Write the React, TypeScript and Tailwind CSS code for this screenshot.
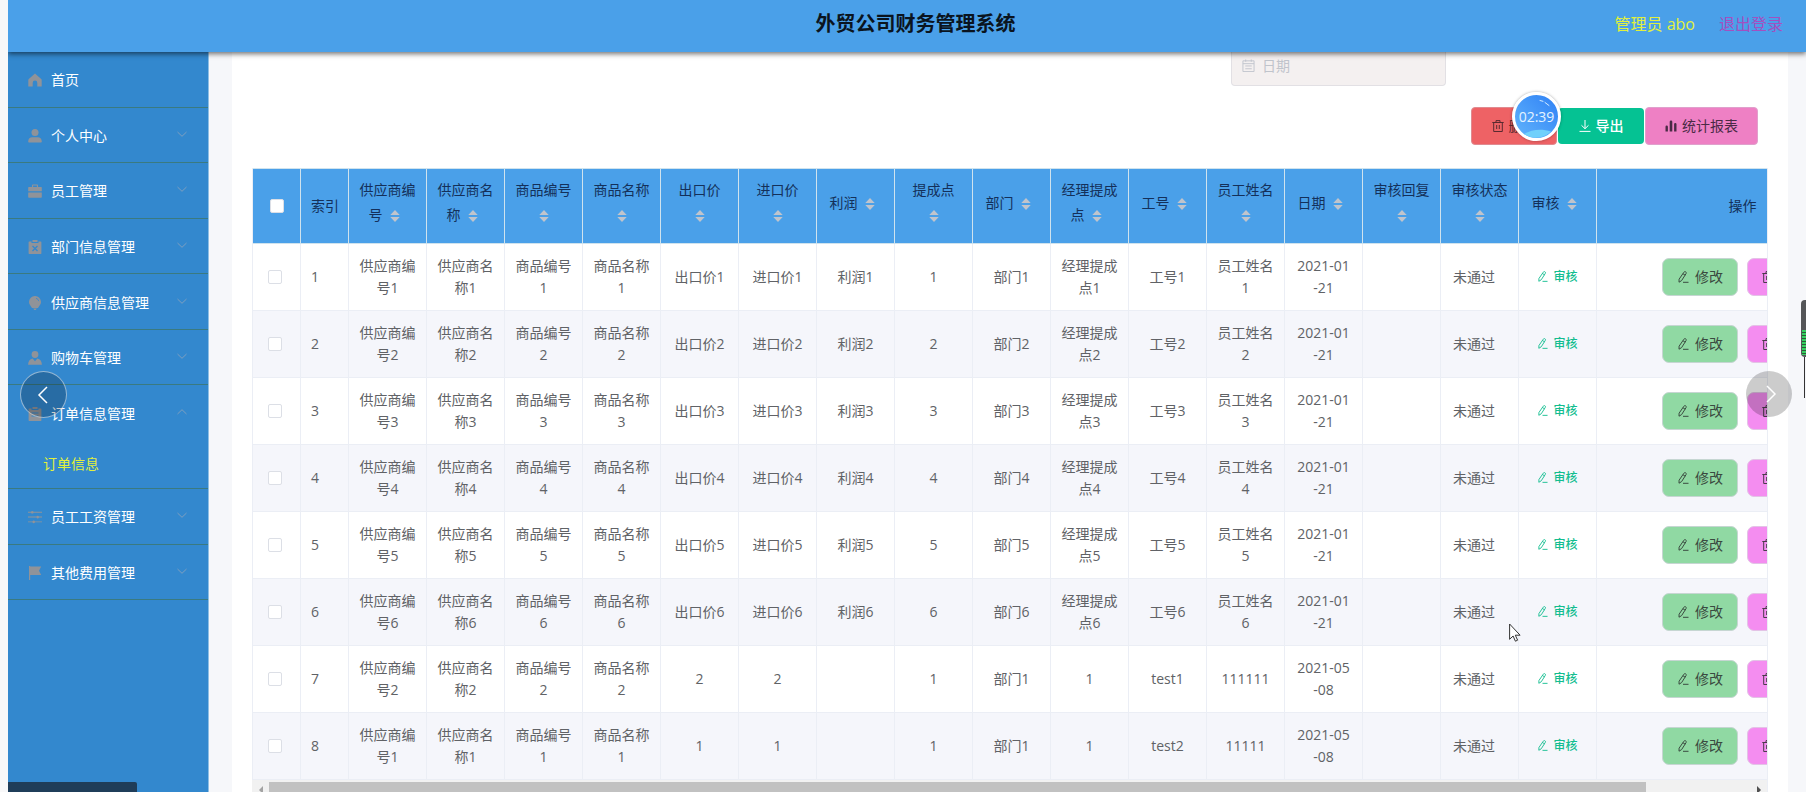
import React from "react";

type IconName =
  | "home" | "user" | "suitcase" | "clipboardX" | "bulb" | "custom" | "order" | "sliders" | "flag";

function MenuIcon({ name }: { name: IconName }) {
  return (
    <svg viewBox="0 0 14 14" className="h-[14px] w-[14px] shrink-0 fill-current" aria-hidden="true">
      {name === "home" && <path d="M7 .4 13.2 6c.3.3.5.6.5 1v6.6H9.300V9.900a2.300 2.300 0 0 0-4.600 0v3.700H.3V7c0-.4.2-.7.5-1z" />}
      {name === "user" && (
        <>
          <circle cx="7" cy="3.6" r="3.5" />
          <path d="M.2 12.6c0-2.9 1.8-4.4 4-4.4h5.6c2.2 0 4 1.5 4 4.4 0 .7-.4 1-1 1H1.2c-.6 0-1-.3-1-1z" />
        </>
      )}
      {name === "suitcase" && (
        <path
          fillRule="evenodd"
          d="M4 3V1.4C4 .8 4.4.4 5 .4h4c.6 0 1 .4 1 1V3h3.2c.4 0 .6.3.6.6V7.300H.2V3.600C.2 3.300.4 3 .8 3zm1.100 0h3.800V1.500H5.100zM.2 8.400h13.600v4.600c0 .4-.3.7-.7.7H.9c-.4 0-.7-.3-.7-.7z"
        />
      )}
      {name === "clipboardX" && (
        <>
          <path d="M1.200 1.500h2.300V3h7V1.500h2.300c.4 0 .6.300.6.600v11.200c0 .4-.2.700-.6.700H1.200c-.4 0-.600-.3-.600-.7V2.100c0-.3.200-.6.600-.6zM4.500 0h5v2h-5z" />
          <path d="M4.500 6l5 5M9.500 6l-5 5" className="fill-none stroke-[#3388ce] stroke-[1.300]" />
        </>
      )}
      {name === "bulb" && (
        <>
          <path d="M7 0a5.900 5.900 0 0 1 6 5.900c0 2.500-1.800 3.700-3 6H4c-1.200-2.300-3-3.500-3-6A5.900 5.900 0 0 1 7 0zM5.200 12.600h3.600L7.800 14H6.200z" />
          <path d="M8 2.200a4 4 0 0 1 2.800 2.900" className="fill-none stroke-[#3388ce] stroke-[.8]" />
        </>
      )}
      {name === "custom" && (
        <>
          <circle cx="7" cy="3.500" r="3.400" />
          <path d="M4.600 7.500 7 10.200l2.400-2.700c2.800.6 4.500 3 4.500 6.200H.1c0-3.200 1.700-5.600 4.500-6.200z" />
        </>
      )}
      {name === "order" && (
        <path
          fillRule="evenodd"
          d="M1.200 1.500h2.300V3h7V1.500h2.300c.4 0 .6.300.6.600v11.200c0 .4-.2.700-.6.700H1.200c-.4 0-.600-.3-.600-.7V2.100c0-.3.200-.6.600-.6zM4.500 0h5v2h-5zM3.500 5.500v1h7v-1zm0 3v1h7v-1z"
        />
      )}
      {name === "sliders" && (
        <path d="M0 1.800h3a1.400 1.400 0 0 1 2.600 0H14v.9H5.600a1.400 1.400 0 0 1-2.600 0H0zM0 6.600h8.400a1.400 1.400 0 0 1 2.600 0h3v.9h-3a1.400 1.400 0 0 1-2.600 0H0zM0 11.400h4.400a1.400 1.400 0 0 1 2.600 0h7v.9H7a1.400 1.400 0 0 1-2.600 0H0z" />
      )}
      {name === "flag" && <path d="M1 0h1.200v.5h11L11 4.700l2.200 4.300h-11V14H1z" />}
    </svg>
  );
}

function Chevron({ up }: { up?: boolean }) {
  return (
    <svg viewBox="0 0 12 12" className="mb-1 h-3 w-3 fill-none stroke-[#7d9fc0]" aria-hidden="true">
      <path d={up ? "M1.500 8 6 3.700 10.500 8" : "M1.500 4 6 8.300 10.500 4"} />
    </svg>
  );
}

function PencilIcon({ className }: { className: string }) {
  return (
    <svg viewBox="0 0 12 12" className={className} fill="none" stroke="currentColor" aria-hidden="true">
      <path d="M6.700 1.500c.5-.9 1.200-1.100 1.900-.7s.9 1.100.4 1.900L4.600 9.600 2 11.200l.1-3zM5.900 2.700l2.300 1.500M6 11.300h5.500" />
    </svg>
  );
}

function TrashIcon({ className }: { className: string }) {
  return (
    <svg viewBox="0 0 12 12" className={className} fill="none" stroke="currentColor" aria-hidden="true">
      <path d="M.3 2.500h11.400M1.700 2.500v9h8.600v-9M4 2.300V.6h4v1.700M4.700 5v4M7.300 5v4" />
    </svg>
  );
}

const menu: { label: string; icon: IconName; open?: boolean; leaf?: boolean }[] = [
  { label: "首页", icon: "home", leaf: true },
  { label: "个人中心", icon: "user" },
  { label: "员工管理", icon: "suitcase" },
  { label: "部门信息管理", icon: "clipboardX" },
  { label: "供应商信息管理", icon: "bulb" },
  { label: "购物车管理", icon: "custom" },
  { label: "订单信息管理", icon: "order", open: true },
  { label: "员工工资管理", icon: "sliders" },
  { label: "其他费用管理", icon: "flag" },
];

const columns = [
  "供应商编号", "供应商名称", "商品编号", "商品名称", "出口价", "进口价", "利润", "提成点",
  "部门", "经理提成点", "工号", "员工姓名", "日期", "审核回复", "审核状态", "审核",
];

const sample = (n: number): string[] => [
  `供应商编号${n}`, `供应商名称${n}`, `商品编号${n}`, `商品名称${n}`, `出口价${n}`, `进口价${n}`,
  `利润${n}`, `${n}`, `部门${n}`, `经理提成点${n}`, `工号${n}`, `员工姓名${n}`, "2021-01|-21", "",
];

const rows: string[][] = [
  ...[1, 2, 3, 4, 5, 6].map(sample),
  ["供应商编号2", "供应商名称2", "商品编号2", "商品名称2", "2", "2", "", "1", "部门1", "1", "test1", "111111", "2021-05|-08", ""],
  ["供应商编号1", "供应商名称1", "商品编号1", "商品名称1", "1", "1", "", "1", "部门1", "1", "test2", "11111", "2021-05|-08", ""],
];

function SortCaret() {
  return (
    <span className="inline-flex h-[30px] w-6 items-center justify-center align-middle">
      <svg viewBox="0 0 10 12" className="h-3 w-[10px] fill-[#c0c4cc]" aria-hidden="true">
        <path d="M5 0 9.700 5H.3zM5 12 .3 7h9.400z" />
      </svg>
    </span>
  );
}

function Check({ label }: { label: string }) {
  return (
    <input
      type="checkbox"
      aria-label={label}
      className="block h-[14px] w-[14px] appearance-none rounded-xs border border-[#dcdfe6] bg-white"
    />
  );
}

function Sidebar() {
  return (
    <nav className="w-[201px] shrink-0 border-r border-[#8fbfe4] bg-[#3388ce] text-sm text-white">
      <ul className="flex h-[548px] flex-col">
        {menu.map((m) => (
          <React.Fragment key={m.label}>
            <li className={m.open ? "flex-1" : "flex-1 border-b border-[#3a7a80]"}>
              <a href="#" className="flex h-full items-center gap-[9px] pt-0.5 pr-5 pl-5">
                <span className="text-[#909399]">
                  <MenuIcon name={m.icon} />
                </span>
                <span className="flex-1">{m.label}</span>
                {!m.leaf && <Chevron up={m.open} />}
              </a>
            </li>
            {m.open && (
              <li className="h-[49px] shrink-0 border-b border-[#3a7a80]">
                <a href="#" className="flex h-full items-center pl-[35px] text-[#e2f03c]">
                  订单信息
                </a>
              </li>
            )}
          </React.Fragment>
        ))}
      </ul>
    </nav>
  );
}

function OrderTable() {
  return (
    <div className="overflow-hidden border-l border-[#ebeef5]">
      <table className="w-[1635px] table-fixed border-separate border-spacing-0 text-center text-sm text-[#606266]">
        <colgroup>
          <col className="w-12" />
          <col className="w-12" />
          {columns.map((c) => (
            <col key={c} className="w-[78px]" />
          ))}
          <col />
        </colgroup>
        <thead className="bg-[#4aa0e9] text-[#14305a]">
          <tr className="h-[76px]">
            <th className="border-y border-r border-[#cfe3ee] pl-[17px]">
              <Check label="全选" />
            </th>
            <th className="border-y border-r border-[#cfe3ee] pl-[10px] text-left font-normal">索引</th>
            {columns.map((c) => (
              <th key={c} className="border-y border-r border-[#cfe3ee] px-[10px] pb-1 leading-[23px] font-normal break-all">
                {c}
                <SortCaret />
              </th>
            ))}
            <th className="border-y border-[#cfe3ee] font-normal">操作</th>
          </tr>
        </thead>
        <tbody>
          {rows.map((r, i) => (
            <tr key={i} className="h-[67px] even:bg-[#f5f6fb]">
              <td className="border-r border-b border-[#ebeef5] pl-[15px]">
                <Check label={`选择第${i + 1}行`} />
              </td>
              <td className="border-r border-b border-[#ebeef5] pl-[10px] text-left">{i + 1}</td>
              {r.map((v, j) => (
                <td key={j} className="border-r border-b border-[#ebeef5] px-[10px] leading-[22px] break-all">
                  {v.split("|").map((part, k) => (
                    <React.Fragment key={k}>
                      {k > 0 && <br />}
                      {part}
                    </React.Fragment>
                  ))}
                </td>
              ))}
              <td className="border-r border-b border-[#ebeef5] pl-3 text-left">未通过</td>
              <td className="border-r border-b border-[#ebeef5]">
                <button type="button" className="inline-flex items-center gap-[5px] text-xs font-medium text-[#13bd8f]">
                  <PencilIcon className="h-[11px] w-[11px]" />
                  审核
                </button>
              </td>
              <td className="border-b border-[#ebeef5]">
                <div className="flex justify-center gap-[9px]">
                  <button type="button" className="flex h-[38px] w-[76px] items-center justify-center gap-1.5 rounded-[7px] border border-[#c6d6d2] bg-[#90d9a3] text-[#3a4a40]">
                    <PencilIcon className="h-3 w-3" />
                    修改
                  </button>
                  <button type="button" className="flex h-[38px] w-[76px] items-center justify-center gap-1.5 rounded-[7px] border border-[#e3c3e6] bg-[#f48df0] text-[#4a3a4a]">
                    <TrashIcon className="h-3 w-3" />
                    删除
                  </button>
                </div>
              </td>
            </tr>
          ))}
        </tbody>
      </table>
    </div>
  );
}

export default function App() {
  return (
    <div className="relative flex h-screen flex-col overflow-hidden bg-[#f8f8f9] pl-2 font-['Open_Sans','Noto_Sans_CJK_SC',sans-serif]">
      <header className="z-10 flex h-[52px] shrink-0 items-center bg-[#4aa0e9] pr-[23px] pb-1 shadow-[0_2px_5px_rgba(0,0,0,0.55)] [clip-path:inset(0_0_-12px_0)]">
        <div className="flex-1" />
        <h1 className="pl-10 text-xl font-bold text-[#0a1420]">外贸公司财务管理系统</h1>
        <div className="flex flex-1 justify-end gap-6 text-base">
          <span className="text-[#e2f03c]">管理员 abo</span>
          <a href="#" className="text-[#a44fc0]">退出登录</a>
        </div>
      </header>

      <div className="flex min-h-0 flex-1">
        <Sidebar />
        <main className="min-w-0 flex-1 overflow-hidden bg-[#f6f7fa] pr-[18px] pl-[23px]">
          <div className="h-full bg-white px-5">
            <div className="flex justify-end pr-[322px]">
              <label className="flex h-[34px] w-[215px] items-center gap-[7px] rounded-b border border-t-0 border-[#e2e0e4] bg-[#f4f0f0] px-[10px] text-[#c0c4cc]">
                <svg viewBox="0 0 14 14" className="mb-1.5 h-[13px] w-[13px] shrink-0 fill-none stroke-current" aria-hidden="true">
                  <path d="M1 2h12v11.500H1zM1 5h12M4 .5v2.500M10 .5v2.500M3.500 7.500h7M3.500 10.500h7" />
                </svg>
                <input
                  aria-label="日期"
                  placeholder="日期"
                  className="mb-1.5 w-full min-w-0 bg-transparent text-sm outline-none placeholder:text-[#c0c4cc]"
                />
              </label>
            </div>

            <div className="mt-[21px] flex items-center justify-end gap-px pr-[10px] text-sm">
              <button type="button" className="flex h-[38px] w-[86px] items-center justify-center gap-[5px] rounded border border-[#e08a90] bg-[#ee6265] text-[#5a2a30]">
                <TrashIcon className="h-3 w-3" />
                删除
              </button>
              <button type="button" className="flex h-9 w-[86px] items-center justify-center gap-[5px] rounded bg-[#05c293] font-medium text-white">
                <svg viewBox="0 0 12 12" className="h-3 w-3 fill-none stroke-current" aria-hidden="true">
                  <path d="M6 0v8.500M2.500 5.300 6 8.700l3.500-3.400M.5 11.400h11" />
                </svg>
                导出
              </button>
              <button type="button" className="flex h-[38px] w-[113px] items-center justify-center gap-[5px] rounded border border-[#e0a0cc] bg-[#ee80c4] text-[#4a2a45]">
                <svg viewBox="0 0 12 12" className="h-3 w-3 fill-current" aria-hidden="true">
                  <path d="M1.700 5.500a1.200 1.200 0 0 1 1.200 1.200V11.500H.5V6.700a1.200 1.200 0 0 1 1.200-1.200zM6 .5a1.300 1.300 0 0 1 1.300 1.300v9.700H4.700V1.800A1.300 1.300 0 0 1 6 .5zM10.300 3a1.200 1.200 0 0 1 1.200 1.200v7.300H9.100V4.200A1.200 1.200 0 0 1 10.300 3z" />
                </svg>
                统计报表
              </button>
            </div>

            <div className="mt-[23px] border-r border-[#ebeef5]">
              <OrderTable />
              <div className="flex h-[17px] bg-[#f1f1f1] pt-0.5">
                <span className="flex w-[17px] items-center justify-center">
                  <svg viewBox="0 0 8 8" className="h-2 w-2 fill-[#a3a3a3]" aria-hidden="true"><path d="M6 0v8L2 4z" /></svg>
                </span>
                <span className="flex-1">
                  <span className="block h-[13px] w-[93%] bg-[#c1c1c1]" />
                </span>
                <span className="flex w-[17px] items-center justify-center">
                  <svg viewBox="0 0 8 8" className="h-2 w-2 fill-[#505050]" aria-hidden="true"><path d="M2 0v8l4-4z" /></svg>
                </span>
              </div>
            </div>
          </div>
        </main>
      </div>

      <div className="absolute top-[92px] right-[245px] z-20 flex h-[49px] w-[49px] items-center justify-center rounded-full border-[3px] border-white bg-linear-to-bl from-[#2f80f5] to-[#62b4fb] shadow-[0_0_3px_rgba(0,0,0,0.35)]">
        <svg viewBox="0 0 43 43" className="absolute inset-0 h-full w-full" aria-hidden="true">
          <path d="M9 39C17 34.500 26 33.500 36 36.500A21.500 21.500 0 0 1 9 39z" fill="#6fd0fb" />
          <path d="M25 5.500l3 .8M30 7.500l4 3" stroke="#d5ecff" strokeLinecap="round" />
        </svg>
        <span className="relative text-sm text-[#e4f3ff]">02:39</span>
      </div>

      <button type="button" aria-label="上一张" className="absolute top-[371px] left-[20px] z-20 flex h-[47px] w-[47px] items-center justify-center rounded-full border border-white/50 bg-black/20">
        <svg viewBox="0 0 18 18" className="h-[18px] w-[18px] fill-none stroke-white stroke-[1.5]" aria-hidden="true"><path d="M12 1 4 9l8 8" /></svg>
      </button>
      <button type="button" aria-label="下一张" className="absolute top-[371px] right-[14px] z-20 flex h-[46px] w-[46px] items-center justify-center rounded-full bg-black/20">
        <svg viewBox="0 0 18 18" className="h-[18px] w-[18px] fill-none stroke-white stroke-[1.5]" aria-hidden="true"><path d="M7 1l8 8-8 8" /></svg>
      </button>

      <svg viewBox="0 0 12 19" className="absolute top-[623px] left-[1509px] z-20 h-[19px] w-3 fill-white stroke-[#333]" aria-hidden="true">
        <path d="M.6 1v15.300l3.500-3.300 2.300 5.200 2.200-1-2.300-5h4.800z" />
      </svg>

      <div className="absolute bottom-0 left-2 z-20 h-[10px] w-[129px] rounded-tr-xs bg-[#1f3d59]" />
      <div className="absolute top-[300px] right-0 z-20 flex w-[5px] flex-col items-end">
        <div className="h-[57px] w-[5px] rounded-l bg-[#555658] pt-[30px]">
          <div className="ml-px h-[25px] bg-[repeating-linear-gradient(#35d060_0_2px,#2c5a38_2px_3px)]" />
        </div>
        <div className="mr-px h-[41px] w-px bg-[#333]" />
      </div>
    </div>
  );
}
